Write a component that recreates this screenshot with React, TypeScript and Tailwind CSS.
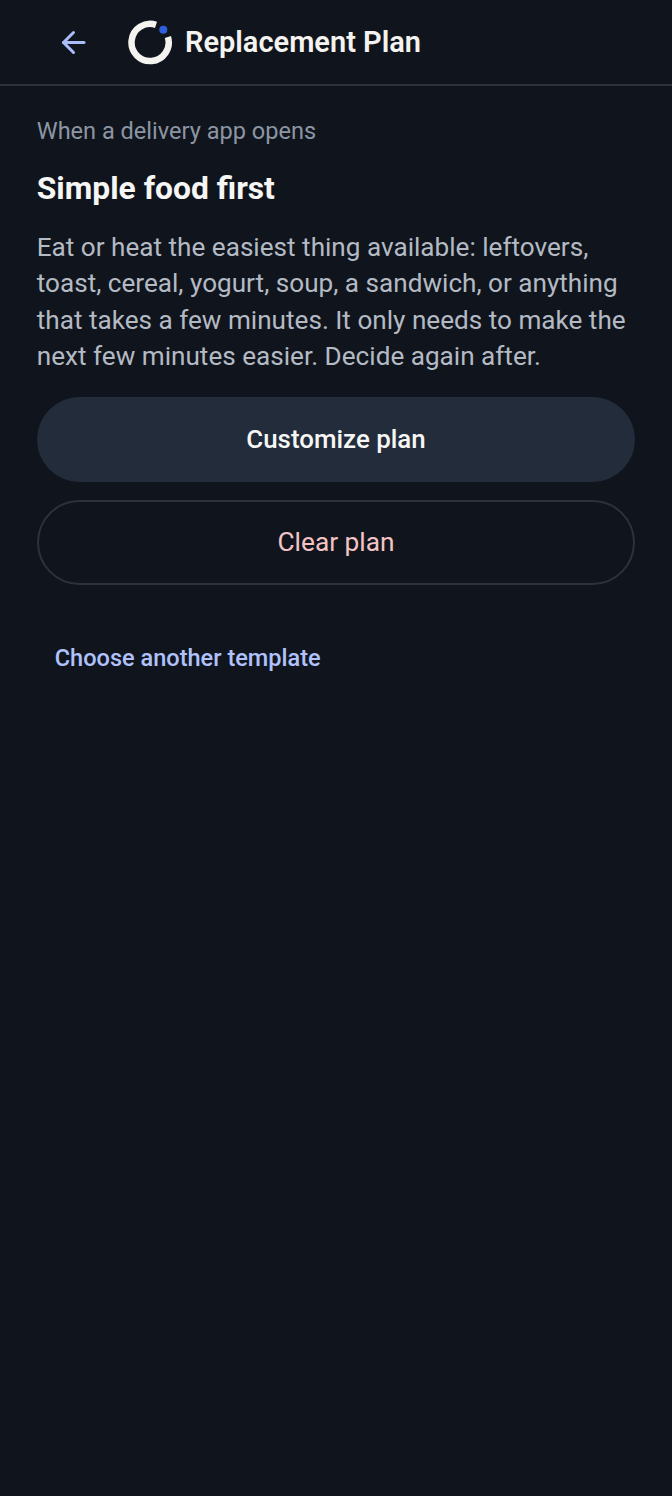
export default function App() {
	return (
		<div className="min-h-[1496px] bg-[#10151d] font-['Roboto',sans-serif]">
			<header className="flex h-[86px] items-center border-b-2 border-[#2c323c] pl-[57px]">
				<button className="flex h-8 w-8 items-center justify-center">
					<svg width="32" height="32" viewBox="0 0 32 32" fill="none" stroke="#a8bdfa" strokeWidth="3" strokeLinecap="round" strokeLinejoin="round">
						<path d="M6.5 16.5H27" />
						<path d="M16.5 6.5L6.5 16.5L16.5 26.5" />
					</svg>
				</button>
				<svg className="ml-[39px] mt-[2px]" width="46" height="46" viewBox="0 0 46 46" fill="none">
					<path d="M28 4.8A18.6 18.6 0 1 0 39.9 17" stroke="#f4f3ef" strokeWidth="6.5" />
					<circle cx="35.3" cy="9.7" r="4" fill="#2f5fdc" />
				</svg>
				<h1 className="ml-[11px] mt-[2px] text-[29px] font-semibold text-[#f4f3ef]">Replacement Plan</h1>
			</header>
			<main className="px-[36.75px]">
				<p className="mt-[29px] text-[23.55px] leading-[32px] text-[#8c95a3]">When a delivery app opens</p>
				<h2 className="mt-[21px] text-[31.8px] leading-[40px] font-bold text-[#f6f6f4]">Simple food first</h2>
				<p className="mt-[21px] text-[26.14px] leading-[36.4px] text-[#b4bac4]">
					Eat or heat the easiest thing available: leftovers, toast, cereal, yogurt, soup, a sandwich, or anything that takes a few minutes. It only needs to make the next few minutes easier. Decide again after.
				</p>
				<button className="mt-[22px] flex h-[85px] w-full items-center justify-center rounded-full bg-[#222c3a] text-[25.9px] font-medium text-[#f6f6f4]">
					Customize plan
				</button>
				<button className="mt-[18px] flex h-[85px] w-full items-center justify-center rounded-full border-2 border-[#2c323c] pt-[2px] text-[26.25px] text-[#f4c4c4]">
					Clear plan
				</button>
				<a className="mt-[57px] ml-[18px] block text-[23.55px] leading-[32px] font-medium text-[#b0c2fb]">Choose another template</a>
			</main>
		</div>
	);
}
